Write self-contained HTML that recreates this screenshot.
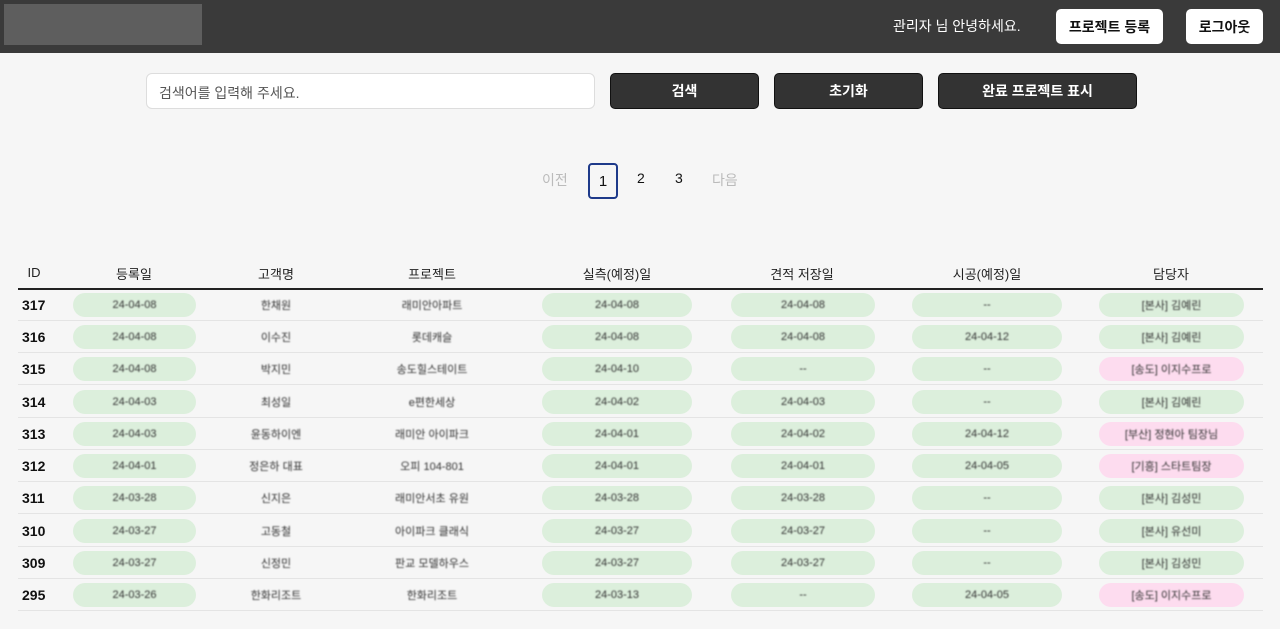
<!DOCTYPE html>
<html><head><meta charset="utf-8"><style>
*{box-sizing:border-box;margin:0;padding:0}
body{width:1280px;height:629px;background:#f6f6f6;font-family:"Liberation Sans","Noto Sans CJK KR",sans-serif;position:relative;overflow:hidden;color:#111}
.hd{position:absolute;left:0;top:0;width:1280px;height:53px;background:#3a3a3a}
.logo{position:absolute;left:4px;top:4px;width:198px;height:41px;background:#5e5e5e}
.hi{position:absolute;left:893px;top:16px;color:#fff;font-size:14px}
.wb{position:absolute;top:9px;height:35px;background:#fff;border-radius:5px;font-size:14px;font-weight:bold;display:flex;align-items:center;justify-content:center;color:#111}
.inp{position:absolute;left:146px;top:73px;width:449px;height:36px;background:#fff;border:1px solid #ddd;border-radius:6px;font-size:14px;color:#555;padding:9px 12px}
.db{position:absolute;top:73px;height:36px;background:#333;border:1px solid #111;border-radius:5px;color:#fff;font-size:14px;font-weight:bold;display:flex;align-items:center;justify-content:center}
.pg{position:absolute;top:170px;font-size:14px}
.pb{position:absolute;left:588px;top:163px;width:30px;height:36px;border:2px solid #1e3a8a;border-radius:4px;font-size:15px;display:flex;align-items:center;justify-content:center}
.th{position:absolute;top:264px;font-size:13px;color:#222;transform:translateX(-50%);white-space:nowrap}
.hl{position:absolute;left:18px;top:288px;width:1245px;height:2px;background:#222}
.r{position:absolute;left:18px;width:1245px;height:32px;border-bottom:1px solid #e4e4e4}
.id{position:absolute;left:4px;top:8px;font-size:14px;font-weight:bold}
.p{position:absolute;top:4px;height:24px;border-radius:12px;background:#dcefdc}
.k{background:#fddcef}
.t{position:absolute;top:4px;height:24px;display:flex;align-items:center;justify-content:center;font-size:11px;color:#333;filter:blur(0.9px);white-space:nowrap}
.a{left:55px;width:123px}.b{left:524px;width:150px}.c{left:713px;width:144px}.d{left:894px;width:150px}.e{left:1081px;width:145px}
.f{left:208px;width:100px}.g{left:364px;width:100px}
</style></head><body>
<div class="hd"><div class="logo"></div><div class="hi">관리자 님 안녕하세요.</div>
<div class="wb" style="left:1056px;width:107px">프로젝트 등록</div>
<div class="wb" style="left:1186px;width:77px">로그아웃</div></div>
<div class="inp">검색어를 입력해 주세요.</div>
<div class="db" style="left:610px;width:149px">검색</div>
<div class="db" style="left:774px;width:149px">초기화</div>
<div class="db" style="left:938px;width:199px">완료 프로젝트 표시</div>
<div class="pg" style="left:542px;color:#bbb">이전</div>
<div class="pb">1</div>
<div class="pg" style="left:637px">2</div>
<div class="pg" style="left:675px">3</div>
<div class="pg" style="left:712px;color:#bbb">다음</div>
<div class="th" style="left:34px;top:265px">ID</div>
<div class="th" style="left:134px">등록일</div>
<div class="th" style="left:276px">고객명</div>
<div class="th" style="left:432px">프로젝트</div>
<div class="th" style="left:617px">실측(예정)일</div>
<div class="th" style="left:802px">견적 저장일</div>
<div class="th" style="left:987px">시공(예정)일</div>
<div class="th" style="left:1171px">담당자</div>
<div class="hl"></div>

<div class="r" style="top:289px"><div class="id">317</div><div class="p a"></div><div class="p b"></div><div class="p c"></div><div class="p d"></div><div class="p e"></div><div class="t a">24-04-08</div><div class="t f">한채원</div><div class="t g">래미안아파트</div><div class="t b">24-04-08</div><div class="t c">24-04-08</div><div class="t d">--</div><div class="t e">[본사] 김예린</div></div>
<div class="r" style="top:321px"><div class="id">316</div><div class="p a"></div><div class="p b"></div><div class="p c"></div><div class="p d"></div><div class="p e"></div><div class="t a">24-04-08</div><div class="t f">이수진</div><div class="t g">롯데캐슬</div><div class="t b">24-04-08</div><div class="t c">24-04-08</div><div class="t d">24-04-12</div><div class="t e">[본사] 김예린</div></div>
<div class="r" style="top:353px"><div class="id">315</div><div class="p a"></div><div class="p b"></div><div class="p c"></div><div class="p d"></div><div class="p e k"></div><div class="t a">24-04-08</div><div class="t f">박지민</div><div class="t g">송도힐스테이트</div><div class="t b">24-04-10</div><div class="t c">--</div><div class="t d">--</div><div class="t e">[송도] 이지수프로</div></div>
<div class="r" style="top:386px"><div class="id">314</div><div class="p a"></div><div class="p b"></div><div class="p c"></div><div class="p d"></div><div class="p e"></div><div class="t a">24-04-03</div><div class="t f">최성일</div><div class="t g">e편한세상</div><div class="t b">24-04-02</div><div class="t c">24-04-03</div><div class="t d">--</div><div class="t e">[본사] 김예린</div></div>
<div class="r" style="top:418px"><div class="id">313</div><div class="p a"></div><div class="p b"></div><div class="p c"></div><div class="p d"></div><div class="p e k"></div><div class="t a">24-04-03</div><div class="t f">윤동하이엔</div><div class="t g">래미안 아이파크</div><div class="t b">24-04-01</div><div class="t c">24-04-02</div><div class="t d">24-04-12</div><div class="t e">[부산] 정현아 팀장님</div></div>
<div class="r" style="top:450px"><div class="id">312</div><div class="p a"></div><div class="p b"></div><div class="p c"></div><div class="p d"></div><div class="p e k"></div><div class="t a">24-04-01</div><div class="t f">정은하 대표</div><div class="t g">오피 104-801</div><div class="t b">24-04-01</div><div class="t c">24-04-01</div><div class="t d">24-04-05</div><div class="t e">[기흥] 스타트팀장</div></div>
<div class="r" style="top:482px"><div class="id">311</div><div class="p a"></div><div class="p b"></div><div class="p c"></div><div class="p d"></div><div class="p e"></div><div class="t a">24-03-28</div><div class="t f">신지은</div><div class="t g">래미안서초 유원</div><div class="t b">24-03-28</div><div class="t c">24-03-28</div><div class="t d">--</div><div class="t e">[본사] 김성민</div></div>
<div class="r" style="top:515px"><div class="id">310</div><div class="p a"></div><div class="p b"></div><div class="p c"></div><div class="p d"></div><div class="p e"></div><div class="t a">24-03-27</div><div class="t f">고동철</div><div class="t g">아이파크 클래식</div><div class="t b">24-03-27</div><div class="t c">24-03-27</div><div class="t d">--</div><div class="t e">[본사] 유선미</div></div>
<div class="r" style="top:547px"><div class="id">309</div><div class="p a"></div><div class="p b"></div><div class="p c"></div><div class="p d"></div><div class="p e"></div><div class="t a">24-03-27</div><div class="t f">신정민</div><div class="t g">판교 모델하우스</div><div class="t b">24-03-27</div><div class="t c">24-03-27</div><div class="t d">--</div><div class="t e">[본사] 김성민</div></div>
<div class="r" style="top:579px"><div class="id">295</div><div class="p a"></div><div class="p b"></div><div class="p c"></div><div class="p d"></div><div class="p e k"></div><div class="t a">24-03-26</div><div class="t f">한화리조트</div><div class="t g">한화리조트</div><div class="t b">24-03-13</div><div class="t c">--</div><div class="t d">24-04-05</div><div class="t e">[송도] 이지수프로</div></div>
</body></html>
